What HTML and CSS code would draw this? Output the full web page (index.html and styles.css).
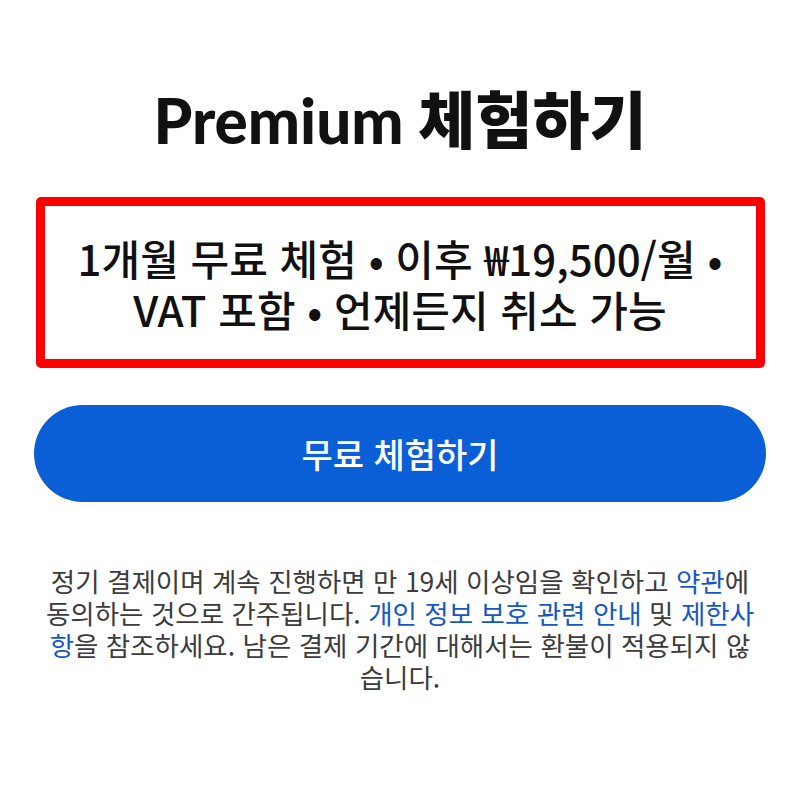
FILE: index.html
```html
<!DOCTYPE html>
<html lang="ko">
<head>
    <meta charset="UTF-8">
    <meta name="viewport" content="width=device-width, initial-scale=1.0">
    <title>Premium 체험하기</title>
    <link rel="stylesheet" href="styles.css">
</head>
<body>

<main class="page">
    <h1 class="title">Premium 체험하기</h1>

    <div class="offer">
        <p>1개월 무료 체험 • 이후 ₩19,500/월 •<br>VAT 포함 • 언제든지 취소 가능</p>
    </div>

    <button class="trial-btn" type="button">무료 체험하기</button>

    <p class="terms">
        정기 결제이며 계속 진행하면 만 19세 이상임을 확인하고 <a href="#">약관</a>에<br>
        동의하는 것으로 간주됩니다. <a href="#">개인 정보 보호 관련 안내</a> 및 <a href="#">제한사<br>
        항</a>을 참조하세요. 남은 결제 기간에 대해서는 환불이 적용되지 않<br>
        습니다.
    </p>
</main>

</body>
</html>
```

FILE: styles.css
```css
body {
    margin: 0;
    background: #fff;
    font-family: "Noto Sans CJK KR", "Noto Sans", sans-serif;
    color: #111;
}
.page {
    width: 800px;
    padding: 78px 34px 0;
    box-sizing: border-box;
    display: flex;
    flex-direction: column;
    align-items: center;
}
.title {
    margin: 0;
    font-family: Lato, "Noto Sans CJK KR", sans-serif;
    font-weight: 900;
    font-size: 62px;
    line-height: 84px;
    color: #111;
}
.offer {
    margin-top: 35px;
    width: 729px;
    height: 171px;
    box-sizing: border-box;
    border: 9px solid #ff0000;
    border-radius: 5px;
    display: flex;
    align-items: center;
    justify-content: center;
}
.offer p {
    margin: 0;
    text-align: center;
    font-size: 42px;
    font-weight: 500;
    line-height: 51px;
    color: #111;
}
.trial-btn {
    margin-top: 37px;
    width: 732px;
    height: 97px;
    border: none;
    border-radius: 49px;
    background-color: #0a5fd7;
    color: #fff;
    font-family: inherit;
    font-size: 34px;
    font-weight: 500;
    cursor: pointer;
}
.terms {
    margin: 63px 0 0;
    text-align: center;
    font-size: 26.5px;
    line-height: 32px;
    color: #3c3c3c;
}
.terms a {
    color: #1558c4;
    text-decoration: none;
}
```
